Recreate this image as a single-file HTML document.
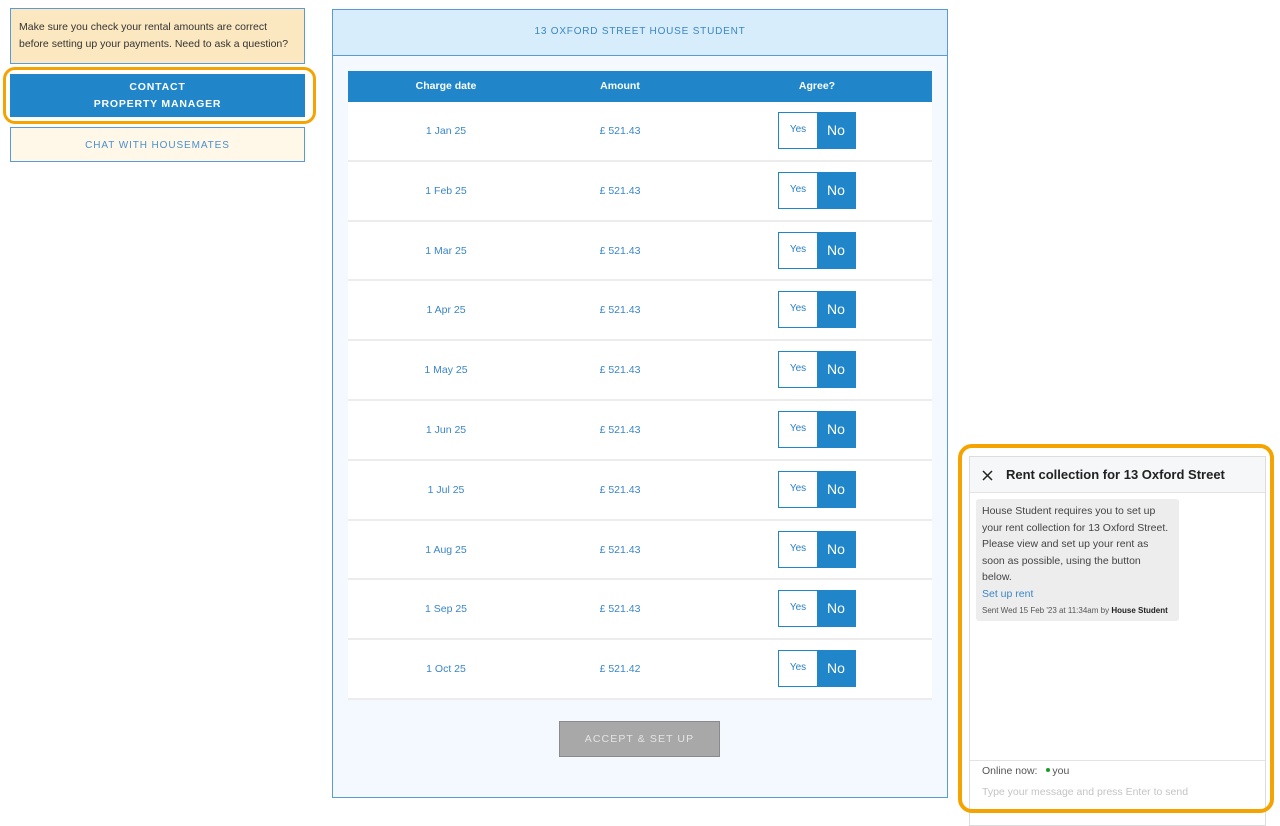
<!DOCTYPE html>
<html><head><style>
*{box-sizing:border-box;margin:0;padding:0}
body{width:1280px;height:815px;background:#fff;font-family:"Liberation Sans",sans-serif;position:relative;overflow:hidden}
.abs{position:absolute}
.note{left:10px;top:8px;width:295px;height:56px;background:#fbe8c0;border:1px solid #5b9bd5;font-size:10.5px;color:#333;padding:10px 8px;line-height:16.5px}
.ring{border:3px solid #f5a300;border-radius:12px}
.contact{left:10px;top:74px;width:295px;height:43px;background:#2086c9;color:#fff;font-weight:bold;font-size:10.5px;letter-spacing:0.8px;text-align:center;padding-top:5px;line-height:17px}
.chat{left:10px;top:127px;width:295px;height:35px;background:#fff8e8;border:1px solid #5b9bd5;color:#4a8fd0;font-size:10px;letter-spacing:0.9px;text-align:center;line-height:35px}
.panel{left:332px;top:9px;width:616px;height:789px;background:#f4f9ff;border:1px solid #5b9bd5}
.phead{position:absolute;left:0;top:0;width:614px;height:46px;background:#d8edfb;border-bottom:1px solid #5b9bd5;text-align:center;line-height:44px;color:#3a86c8;font-size:10px;letter-spacing:0.8px}
.thead{left:348px;top:71px;width:584px;height:31px;background:#2086c9;color:#fff;font-size:10.5px;font-weight:bold}
.thead span,.row span{position:absolute;transform:translateX(-50%);white-space:nowrap}
.row{position:absolute;left:348px;width:584px;height:59.8px;background:#fff;border-bottom:2px solid #ececec;color:#3a86c8;font-size:10.5px}
.tog{position:absolute;left:430px;width:78px;height:37px;border:1px solid #2086c9;background:#fff}
.tog .y{position:absolute;left:0;top:0;width:38px;height:35px;line-height:33px;text-align:center;font-size:10px;color:#2a7fc4}
.tog .n{position:absolute;left:38px;top:0;width:38px;height:35px;background:#2086c9;color:#fff;font-size:14px;text-align:center;line-height:34px}
.accept{left:559px;top:721px;width:161px;height:36px;background:#a8a8a8;border:1px solid #8a8a8a;color:#e4e4e4;font-size:10.5px;letter-spacing:1.1px;text-align:center;line-height:34px}
.cp{left:969px;top:456px;width:297px;height:370px;border:1px solid #ddd;background:#fff}
.ch{position:absolute;left:0;top:0;width:295px;height:36px;background:#f5f7f8;border-bottom:1px solid #e3e3e3;font-size:13px;font-weight:bold;color:#222;line-height:36px;padding-left:36px}
.bub{left:976px;top:499px;width:203px;height:122px;background:#ededed;border-radius:3px;font-size:10.5px;color:#444;padding:4px 6px;line-height:16.5px}
</style></head><body>
<div class="abs note">Make sure you check your rental amounts are correct before setting up your payments. Need to ask a question?</div>
<div class="abs ring" style="left:3px;top:67px;width:313px;height:57px"></div>
<div class="abs contact">CONTACT<br>PROPERTY MANAGER</div>
<div class="abs chat">CHAT WITH HOUSEMATES</div>

<div class="abs panel"><div class="phead">13 OXFORD STREET HOUSE STUDENT</div></div>
<div class="abs thead"><span style="left:98px;top:9px">Charge date</span><span style="left:272px;top:9px">Amount</span><span style="left:469px;top:9px">Agree?</span></div>

<div class="row" style="top:102px"><span style="left:98px;top:23px">1 Jan 25</span><span style="left:272px;top:23px">£ 521.43</span><div class="tog" style="top:10px"><div class="y">Yes</div><div class="n">No</div></div></div>
<div class="row" style="top:161.8px"><span style="left:98px;top:23px">1 Feb 25</span><span style="left:272px;top:23px">£ 521.43</span><div class="tog" style="top:10px"><div class="y">Yes</div><div class="n">No</div></div></div>
<div class="row" style="top:221.6px"><span style="left:98px;top:23px">1 Mar 25</span><span style="left:272px;top:23px">£ 521.43</span><div class="tog" style="top:10px"><div class="y">Yes</div><div class="n">No</div></div></div>
<div class="row" style="top:281.4px"><span style="left:98px;top:23px">1 Apr 25</span><span style="left:272px;top:23px">£ 521.43</span><div class="tog" style="top:10px"><div class="y">Yes</div><div class="n">No</div></div></div>
<div class="row" style="top:341.2px"><span style="left:98px;top:23px">1 May 25</span><span style="left:272px;top:23px">£ 521.43</span><div class="tog" style="top:10px"><div class="y">Yes</div><div class="n">No</div></div></div>
<div class="row" style="top:401px"><span style="left:98px;top:23px">1 Jun 25</span><span style="left:272px;top:23px">£ 521.43</span><div class="tog" style="top:10px"><div class="y">Yes</div><div class="n">No</div></div></div>
<div class="row" style="top:460.8px"><span style="left:98px;top:23px">1 Jul 25</span><span style="left:272px;top:23px">£ 521.43</span><div class="tog" style="top:10px"><div class="y">Yes</div><div class="n">No</div></div></div>
<div class="row" style="top:520.6px"><span style="left:98px;top:23px">1 Aug 25</span><span style="left:272px;top:23px">£ 521.43</span><div class="tog" style="top:10px"><div class="y">Yes</div><div class="n">No</div></div></div>
<div class="row" style="top:580.4px"><span style="left:98px;top:23px">1 Sep 25</span><span style="left:272px;top:23px">£ 521.43</span><div class="tog" style="top:10px"><div class="y">Yes</div><div class="n">No</div></div></div>
<div class="row" style="top:640.2px"><span style="left:98px;top:23px">1 Oct 25</span><span style="left:272px;top:23px">£ 521.42</span><div class="tog" style="top:10px"><div class="y">Yes</div><div class="n">No</div></div></div>

<div class="abs accept">ACCEPT &amp; SET UP</div>

<div class="abs cp">
<div class="ch">Rent collection for 13 Oxford Street</div>
<svg style="position:absolute;left:12px;top:13px" width="11" height="11" viewBox="0 0 11 11"><path d="M1 1L10 10M10 1L1 10" stroke="#222" stroke-width="1.5"/></svg>
<div style="position:absolute;left:0;top:303px;width:295px;border-top:1px solid #e3e3e3"></div>
<div style="position:absolute;left:12px;top:308px;font-size:10.5px;color:#555">Online now: <span style="display:inline-block;width:4px;height:4px;border-radius:50%;background:#1a9c2a;margin:0 2px 2px 6px;vertical-align:middle"></span>you</div>
<div style="position:absolute;left:12px;top:329px;font-size:10.5px;color:#c4c4c4">Type your message and press Enter to send</div>
</div>
<div class="abs bub">House Student requires you to set up your rent collection for 13 Oxford Street. Please view and set up your rent as soon as possible, using the button below.<br><span style="color:#3a86c8">Set up rent</span><br><span style="font-size:8px;color:#555">Sent Wed 15 Feb '23 at 11:34am by <b style="color:#222">House Student</b></span></div>
<div class="abs ring" style="left:958px;top:444px;width:316px;height:369px;border-radius:14px;border-width:4px"></div>
</body></html>
